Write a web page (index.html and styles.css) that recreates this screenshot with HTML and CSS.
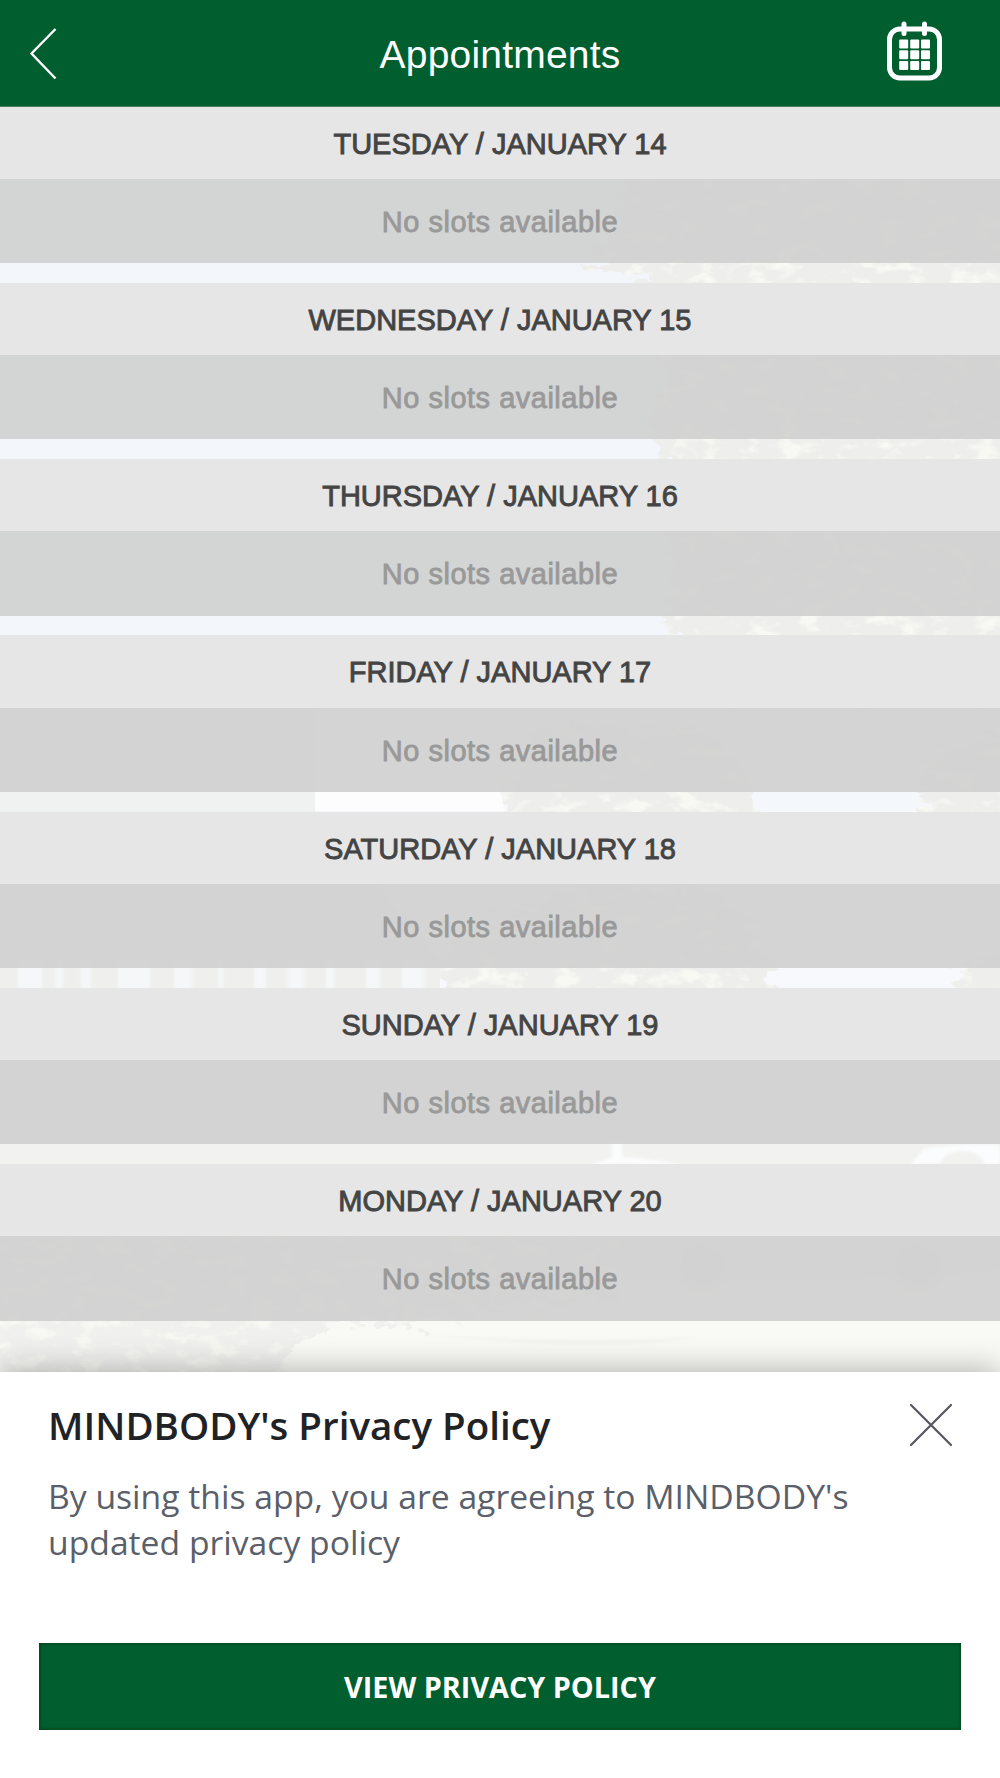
FILE: index.html
```html
<!DOCTYPE html>
<html lang="en">
<head>
<meta charset="utf-8">
<title>Appointments</title>
<link rel="stylesheet" href="styles.css">
</head>
<body>
<svg class="scene" viewBox="0 0 1000 1778" aria-hidden="true">
  <defs>
    <linearGradient id="sky" x1="0" y1="0" x2="0" y2="1">
      <stop offset="0" stop-color="#f2f6fb"/><stop offset=".35" stop-color="#f3f7fb"/><stop offset=".6" stop-color="#f8f9fc"/>
    </linearGradient>
    <filter id="leaves" x="0" y="0" width="100%" height="100%" color-interpolation-filters="sRGB">
      <feTurbulence type="fractalNoise" baseFrequency=".04 .07" numOctaves="4" seed="8" result="noise"/>
      <feDisplacementMap in="SourceGraphic" in2="noise" scale="60" xChannelSelector="R" yChannelSelector="G" result="crown"/>
      <feColorMatrix in="noise" values="0 0 0 0 .975  0 0 0 0 .978  0 0 0 0 .955  0 0 0 4 -2"/>
      <feComposite in2="crown" operator="in" result="light"/>
      <feMerge><feMergeNode in="crown"/><feMergeNode in="light"/></feMerge>
    </filter>
    <filter id="soft"><feGaussianBlur stdDeviation="1.500"/></filter>
    <filter id="softer"><feGaussianBlur stdDeviation="5"/></filter>
  </defs>
  <rect width="1000" height="1778" fill="url(#sky)"/>
  <g fill="#eeeeec" filter="url(#leaves)">
    <path d="M630 170 598 264 606 278 640 284 660 350 655 440 670 460 665 600 680 650 700 700 1060 700V170Z"/>
    <path d="M500 825 508 770 560 720 700 730 750 780 765 825Z"/>
    <path d="M1060 720 940 750 915 790 935 830H1060Z"/>
    <path d="M440 1010 450 940 600 880 730 900 775 969 775 1010ZM960 1010 955 969 1000 950H1060V1010Z"/>
  </g>
  <path d="M0 710H315V811H0Z" fill="#f0f1f1"/>
  <path d="M315 792H500L505 811H315Z" fill="#fdfdfe"/>
  <path d="M0 811H315L440 960V989H0Z" fill="#efefee"/>
  <path d="M18 960h24v29H18ZM55 960h8v29H55ZM81 960h10v29H81ZM118 960h32v29H118ZM174 960h18v29H174ZM218 960h5v29H218ZM254 960h12v29H254ZM288 960h16v29H288ZM326 960h8v29H326ZM366 960h14v29H366ZM402 960h22v29H402Z" fill="#f5f7f8" filter="url(#soft)"/>
  <path d="M0 989H1000V1240H0Z" fill="#f2f2f1"/>
  <path d="M590 1165q18-6 22-8v-16h10v16q35 2 62 8ZM910 1165l15-17q40-5 75-3v20h-15q-4-12-18-14-20-2-28 14Z" fill="#fbfcfd" filter="url(#soft)"/>
  <path d="M0 1240H1000V1372H0Z" fill="#f9faf5"/>
  <path d="M0 1237H1000V1270Q800 1290 400 1275H0Z" fill="#f1f1f2"/>
  <path d="M400 1333Q560 1345 700 1337 620 1350 500 1341Z" fill="#f2f3ed" filter="url(#soft)"/>
  <path d="M-60 1200H620V1300L330 1330 285 1350 290 1400H-60Z" fill="#f0f0ee" filter="url(#leaves)"/>
  <g fill="#e6e6e5" filter="url(#softer)"><ellipse cx="702" cy="1265" rx="27" ry="25"/><ellipse cx="918" cy="1265" rx="28" ry="25"/></g>
</svg>

<div class="screen">
  <header class="navbar">
    <svg class="back" width="30" height="54" viewBox="0 0 30 54"><path d="M27.500 2 3.500 26.500 27.500 51.500"/></svg>
    <h1>Appointments</h1>
    <svg class="calendar" width="56" height="62" viewBox="0 0 56 62">
      <rect x="2.500" y="8" width="50" height="49" rx="10.500" fill="none" stroke="#fff" stroke-width="5"/>
      <path d="M17 3v9.500M37.500 3v9.500" stroke="#fff" stroke-width="5" stroke-linecap="round"/>
      <g fill="#fff">
        <rect x="12.200" y="18.500" width="9" height="9" rx="1"/><rect x="23.200" y="18.500" width="9" height="9" rx="1"/><rect x="34" y="18.500" width="9" height="9" rx="1"/>
        <rect x="12.200" y="29.300" width="9" height="9" rx="1"/><rect x="23.200" y="29.300" width="9" height="9" rx="1"/><rect x="34" y="29.300" width="9" height="9" rx="1"/>
        <rect x="12.200" y="40" width="9" height="9" rx="1"/><rect x="23.200" y="40" width="9" height="9" rx="1"/><rect x="34" y="40" width="9" height="9" rx="1"/>
      </g>
    </svg>
  </header>

  <main class="days">
    <section><h2>TUESDAY / JANUARY 14</h2><p>No slots available</p></section>
    <section><h2>WEDNESDAY / JANUARY 15</h2><p>No slots available</p></section>
    <section><h2>THURSDAY / JANUARY 16</h2><p>No slots available</p></section>
    <section><h2>FRIDAY / JANUARY 17</h2><p>No slots available</p></section>
    <section><h2>SATURDAY / JANUARY 18</h2><p>No slots available</p></section>
    <section><h2>SUNDAY / JANUARY 19</h2><p>No slots available</p></section>
    <section><h2>MONDAY / JANUARY 20</h2><p>No slots available</p></section>
  </main>

  <aside class="sheet">
    <div class="sheet-head">
      <h3>MINDBODY's Privacy Policy</h3>
      <svg class="close" width="44" height="44" viewBox="0 0 44 44"><path d="M2 2 42 42M42 2 2 42"/></svg>
    </div>
    <p>By using this app, you are agreeing to MINDBODY's<br>updated privacy policy</p>
    <button>VIEW PRIVACY POLICY</button>
  </aside>
</div>
</body>
</html>
```

FILE: styles.css
```css
* { box-sizing: border-box; }
body, h1, h2, h3, p { margin: 0; }
body {
  background: #fff;
  font-family: "Liberation Sans", Arial, sans-serif;
}
.scene {
  position: absolute;
  top: 0;
  left: 0;
  width: 1000px;
  height: 1778px;
}
.screen {
  position: relative;
  display: flex;
  flex-direction: column;
  width: 1000px;
  height: 1778px;
  overflow: hidden;
}
.navbar {
  display: grid;
  grid-template-columns: 200px 1fr 200px;
  height: 106.600px;
  flex: none;
  background: #005e2f;
  border-bottom: 1px solid #4a7d60;
}
.back {
  margin: 27px 0 0 28px;
  fill: none;
  stroke: #fff;
  stroke-width: 2.4;
}
.navbar h1 {
  color: #fff;
  font-size: 39px;
  font-weight: 400;
  line-height: 45px;
  margin-top: 32px;
  text-align: center;
  letter-spacing: 0.2px;
}
.calendar { margin: 21px 0 0 87px; }

.days {
  display: flex;
  flex-direction: column;
  gap: 19.600px;
  height: 1265.400px;
  flex: none;
  font-size: 29px;
}
.days h2 {
  height: 72.300px;
  background: #e6e6e6;
  color: #444;
  font-size: 29px;
  font-weight: 400;
  line-height: 74.500px;
  text-align: center;
  -webkit-text-stroke: 0.9px #444;
}
.days p {
  height: 84.350px;
  background: rgba(208, 208, 208, 0.92);
  color: #999;
  line-height: 87px;
  text-align: center;
  letter-spacing: 0.5px;
  -webkit-text-stroke: 0.8px #999;
}

.sheet {
  display: flex;
  flex-direction: column;
  flex: 1;
  padding: 0 39px 48.500px;
  background: #fff;
  box-shadow: 0 -2px 30px rgba(0, 0, 0, 0.29);
  font-family: "Open Sans", sans-serif;
}
.sheet-head {
  display: flex;
  justify-content: space-between;
  padding: 26px 8px 0 9px;
}
.sheet h3 {
  color: #212226;
  font-size: 38.500px;
  font-weight: 600;
  line-height: 54px;
}
.close {
  margin-top: 5px;
  fill: none;
  stroke: #55565f;
  stroke-width: 2.2;
  stroke-linecap: round;
}
.sheet p {
  margin: 21px 0 0 9px;
  color: #5a5f69;
  font-size: 33.700px;
  line-height: 46px;
}
.sheet button {
  height: 87px;
  margin-top: auto;
  border: 0;
  background: #005e2f;
  box-shadow: inset 0 0 2px 2px #004e20;
  color: #fff;
  font: 700 28.800px "Open Sans", sans-serif;
}
```
